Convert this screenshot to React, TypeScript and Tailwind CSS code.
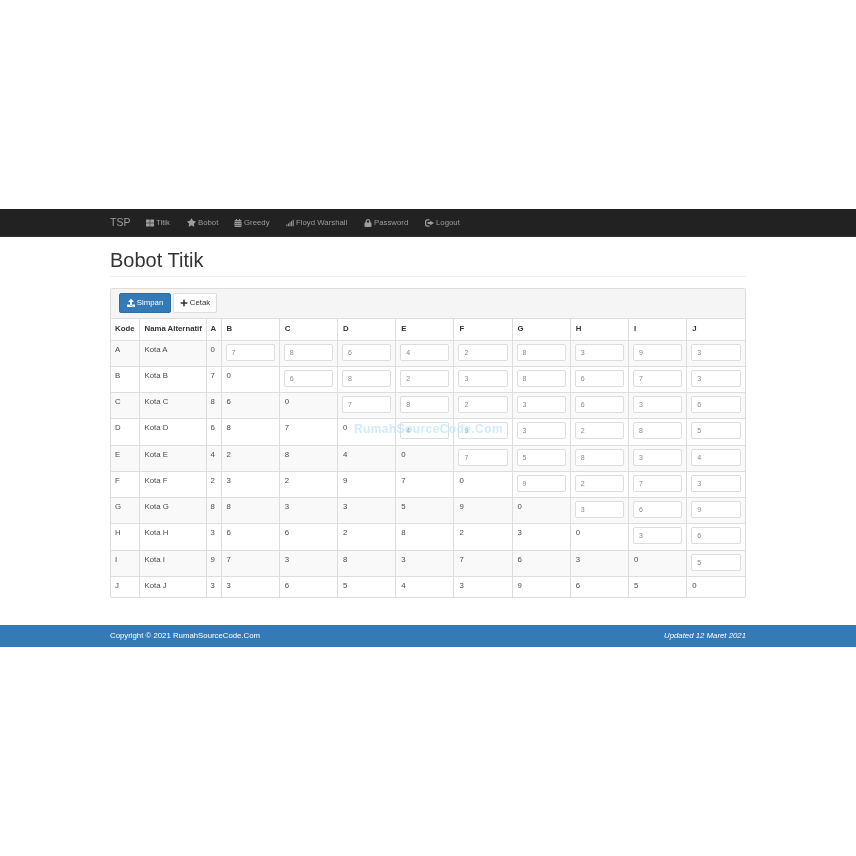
import React from 'react'
import { FaCalendarAlt, FaLock, FaPlus, FaSignal, FaStar, FaThLarge, FaUpload } from 'react-icons/fa'

const LogoutIcon = () => (
  <svg viewBox="0 0 12 10" className="h-[8px] w-[9px]" fill="currentColor">
    <path d="M3 0h3v1.6H3.2c-.9 0-1.6.7-1.6 1.6v3.6c0 .9.7 1.6 1.6 1.6H6V10H3C1.3 10 0 8.700 0 7V3C0 1.300 1.300 0 3 0z" />
    <path d="M7 2l5 3-5 3V6.300H3.500V3.700H7z" />
  </svg>
)

const menu = [
  { label: 'Titik', icon: <FaThLarge size={8} />, width: 'w-[41px]' },
  { label: 'Bobot', icon: <FaStar size={9} />, width: 'w-[47px]' },
  { label: 'Greedy', icon: <FaCalendarAlt size={8} />, width: 'w-[52px]' },
  { label: 'Floyd Warshall', icon: <FaSignal size={8} />, width: 'w-[78px]' },
  { label: 'Password', icon: <FaLock size={8} />, width: 'w-[61px]' },
  { label: 'Logout', icon: <LogoutIcon />, width: '' }
]

const cols = ['B', 'C', 'D', 'E', 'F', 'G', 'H', 'I', 'J']

const matrix = [
  [0, 7, 8, 6, 4, 2, 8, 3, 9, 3],
  [7, 0, 6, 8, 2, 3, 8, 6, 7, 3],
  [8, 6, 0, 7, 8, 2, 3, 6, 3, 6],
  [6, 8, 7, 0, 4, 9, 3, 2, 8, 5],
  [4, 2, 8, 4, 0, 7, 5, 8, 3, 4],
  [2, 3, 2, 9, 7, 0, 9, 2, 7, 3],
  [8, 8, 3, 3, 5, 9, 0, 3, 6, 9],
  [3, 6, 6, 2, 8, 2, 3, 0, 3, 6],
  [9, 7, 3, 8, 3, 7, 6, 3, 0, 5],
  [3, 3, 6, 5, 4, 3, 9, 6, 5, 0]
]

const kode = ['A', 'B', 'C', 'D', 'E', 'F', 'G', 'H', 'I', 'J']

const App = () => {
  return (
    <div className="min-h-[856px] pt-[209px] font-['Liberation_Sans',Arial,sans-serif] text-[7.8px] text-[#4a4a4a] will-change-transform">
      <nav className="h-[28px] border-b border-[#333] bg-[#222]">
        <div className="mx-auto flex h-full w-[636px] items-center text-[#9d9d9d]">
          <span className="w-[36px] text-[10.5px]">TSP</span>
          {menu.map((m) => (
            <span key={m.label} className={`flex items-center gap-[2px] ${m.width}`}>
              {m.icon}
              {m.label}
            </span>
          ))}
        </div>
      </nav>

      <div className="mx-auto w-[636px]">
        <h1 className="mt-[12px] h-[28px] border-b border-[#eee] text-[20px] leading-[23px] text-[#333]">Bobot Titik</h1>

        <div className="relative mt-[11px] overflow-hidden rounded-[2px] border border-[#ddd]">
          <div className="flex h-[30px] items-center gap-[2px] border-b border-[#ddd] bg-[#f5f5f5] pb-[2px] pl-[8px]">
            <button className="flex h-[20px] w-[52px] items-center justify-center gap-[2px] rounded-[2px] border border-[#2e6da4] bg-[#337ab7] text-white">
              <FaUpload size={8} />
              Simpan
            </button>
            <button className="flex h-[20px] w-[44px] items-center justify-center gap-[2px] rounded-[2px] border border-[#ddd] bg-white text-[#333]">
              <FaPlus size={8} />
              Cetak
            </button>
          </div>

          <table className="w-full table-fixed border-collapse">
            <colgroup>
              <col className="w-[28px]" />
              <col className="w-[67px]" />
              <col className="w-[15px]" />
              {cols.map((c) => (
                <col key={c} />
              ))}
            </colgroup>
            <thead>
              <tr className="h-[21px] font-bold text-[#333]">
                <th className="border-r border-[#ddd] pl-[4px] text-left whitespace-nowrap">Kode</th>
                <th className="border-r border-[#ddd] pl-[5px] text-left whitespace-nowrap">Nama Alternatif</th>
                <th className="border-r border-[#ddd] pl-[4px] text-left">A</th>
                {cols.map((c) => (
                  <th key={c} className="border-r border-[#ddd] pl-[5px] text-left last:border-r-0">
                    {c}
                  </th>
                ))}
              </tr>
            </thead>
            <tbody>
              {matrix.map((row, i) => (
                <tr key={kode[i]} className={`border-t border-[#ddd] align-top ${i % 2 === 0 ? 'bg-[#f9f9f9]' : 'bg-white'}`}>
                  <td className="border-r border-[#ddd] px-[4px] pt-[3px]">{kode[i]}</td>
                  <td className="border-r border-[#ddd] px-[5px] pt-[3px] whitespace-nowrap">Kota {kode[i]}</td>
                  {row.map((v, j) => (
                    <td
                      key={j}
                      className={`border-r border-[#ddd] last:border-r-0 ${j === 0 || j > i ? 'px-[4px]' : 'px-[5px]'} pt-[3px] ${i === 9 ? 'h-[21px]' : 'h-[26.25px]'}`}
                    >
                      {j > i ? (
                        <input
                          readOnly
                          value={v}
                          className="block h-[17px] w-full rounded-[2px] border border-[#ddd] bg-white pl-[5px] text-[7px] text-[#888]"
                        />
                      ) : (
                        v
                      )}
                    </td>
                  ))}
                </tr>
              ))}
            </tbody>
          </table>

          <span className="absolute top-[131px] left-[243px] text-[12px] font-bold tracking-[0.4px] text-[#bfe6fb]/75">
            RumahSourceCode.Com
          </span>
        </div>
      </div>

      <footer className="mt-[27px] h-[22px] bg-[#337ab7] text-white">
        <div className="mx-auto flex h-full w-[636px] items-center justify-between">
          <span>Copyright © 2021 RumahSourceCode.Com</span>
          <em>Updated 12 Maret 2021</em>
        </div>
      </footer>
    </div>
  )
}

export default App
